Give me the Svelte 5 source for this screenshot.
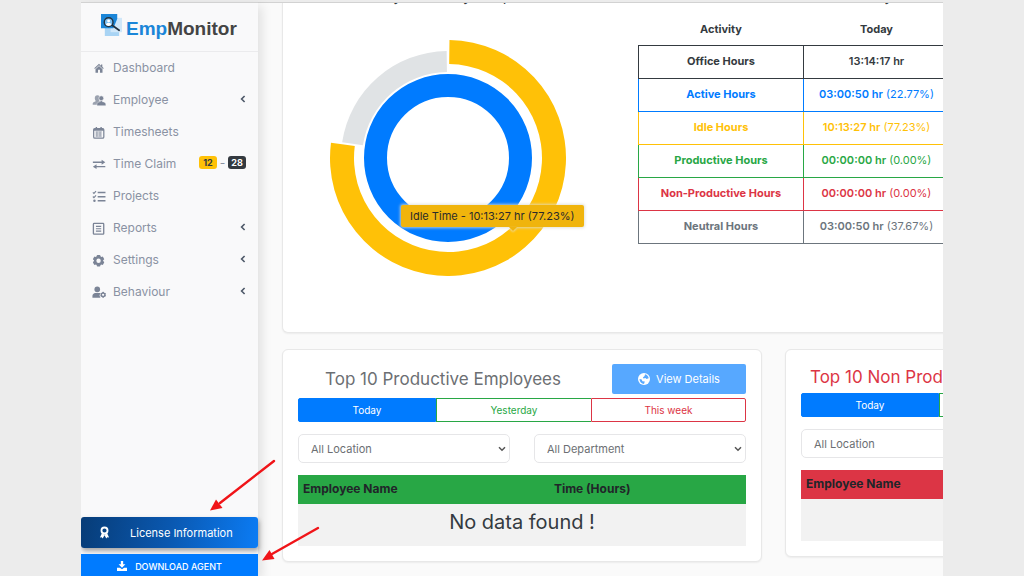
<script>
  const menu = [
    { label: 'Dashboard', icon: 'home' },
    { label: 'Employee', icon: 'people', more: true },
    { label: 'Timesheets', icon: 'calendar' },
    { label: 'Time Claim', icon: 'swap', badges: true },
    { label: 'Projects', icon: 'list' },
    { label: 'Reports', icon: 'report', more: true },
    { label: 'Settings', icon: 'gear', more: true },
    { label: 'Behaviour', icon: 'usergear', more: true }
  ];

  const activity = [
    { name: 'Office Hours', time: '13:14:17 hr', tone: 'dark' },
    { name: 'Active Hours', time: '03:00:50 hr', share: '(22.77%)', tone: 'blue' },
    { name: 'Idle Hours', time: '10:13:27 hr', share: '(77.23%)', tone: 'yellow' },
    { name: 'Productive Hours', time: '00:00:00 hr', share: '(0.00%)', tone: 'green' },
    { name: 'Non-Productive Hours', time: '00:00:00 hr', share: '(0.00%)', tone: 'red' },
    { name: 'Neutral Hours', time: '03:00:50 hr', share: '(37.67%)', tone: 'gray' }
  ];

  // Point on a circle, with the share measured clockwise from the top.
  function point(cx, cy, r, share) {
    const a = share * 2 * Math.PI;
    return `${(cx + r * Math.sin(a)).toFixed(2)} ${(cy - r * Math.cos(a)).toFixed(2)}`;
  }

  function arc(cx, cy, outer, inner, from, to) {
    const large = to - from > 0.5 ? 1 : 0;
    return `M${point(cx, cy, outer, from)} A${outer} ${outer} 0 ${large} 1 ${point(cx, cy, outer, to)} L${point(cx, cy, inner, to)} A${inner} ${inner} 0 ${large} 0 ${point(cx, cy, inner, from)} Z`;
  }

  const idleArc = arc(118, 118, 118, 94, 0.002, 0.7705);
  const restArc = arc(118, 118, 107, 86, 0.7735, 0.998);
</script>

{#snippet gear(cx, cy, r)}
  {#each [0, 60, 120] as turn}
    <rect x={cx - r * 0.32} y={cy - r} width={r * 0.64} height={r * 2} rx="1" transform="rotate({turn} {cx} {cy})" />
  {/each}
  <circle {cx} {cy} r={r * 0.6} fill="none" stroke="currentColor" stroke-width={r * 0.42} />
  <circle {cx} {cy} r={r * 0.38} fill="#f9f9fa" />
{/snippet}

{#snippet icon(name)}
  <svg class="icon" viewBox="0 0 16 16" fill="currentColor" aria-hidden="true">
    {#if name === 'home'}
      <path d="M8 3.2 2.6 8.2l.8.9L8 4.900l4.600 4.200.8-.9-1.600-1.500V3.900h-1.500v1.400z" />
      <path d="M8 5.800 4 9.400V13.500h2.900V10.100h2.200v3.400H12V9.400z" />
    {:else if name === 'people'}
      <path d="M6.200 2.600c2 0 3 1.400 3 3.300 0 1.300-.5 2.300-1.200 3 .6.8 3.600 1 3.600 3.600V13.500H.8v-1.100c0-2.400 3-2.600 3.600-3.400-.7-.7-1.200-1.800-1.200-3.100 0-1.900 1-3.300 3-3.300z" opacity=".75" />
      <circle cx="10.600" cy="6" r="2.800" stroke="#f9f9fa" stroke-width=".7" />
      <path d="M9.400 8.700h2.400v1.200c2.400.4 4 1 4 3v1.600H5.700v-1.600c0-2 1.400-2.600 3.700-3z" stroke="#f9f9fa" stroke-width=".5" />
    {:else if name === 'calendar'}
      <rect x="1.900" y="4" width="11.600" height="11" rx="1.400" fill="none" stroke="currentColor" stroke-width="1.400" />
      <path d="M4.200 2.200h1.600v2.600H4.200zM9.600 2.200h1.600v2.600H9.600zM1.900 4.300h11.600v2.200H1.900z" />
      <path d="M4 8h7.400M4 10.300h7.400M4 12.600h7.400M5.600 7.500v5.800M9.200 7.500v5.800" stroke="currentColor" stroke-width=".8" />
    {:else if name === 'swap'}
      <path d="M1 5.200h10V3.200l4.200 2.800L11 8.800v-2H1zM15.200 10.200H5.200v-2L1 11l4.200 2.800v-2h10z" />
    {:else if name === 'list'}
      <path d="M6.500 4h8.900M6.500 8.800h8.900M6.500 13.500h8.900" stroke="currentColor" stroke-width="1.600" />
      <path d="m1 3.800 1.200 1.200 2.400-2.600M1 8.600l1.200 1.200 2.400-2.600" fill="none" stroke="currentColor" stroke-width="1.300" />
      <circle cx="2.800" cy="13.500" r="1.400" />
    {:else if name === 'report'}
      <rect x="1.600" y="2.800" width="11.800" height="12.200" rx=".8" fill="none" stroke="currentColor" stroke-width="1.500" />
      <path d="M4.500 6.200h6M4.500 8.900h6M4.500 11.600h6" stroke="currentColor" stroke-width="1.300" />
    {:else if name === 'gear'}
      {@render gear(7.5, 8.8, 6.6)}
    {:else if name === 'usergear'}
      <circle cx="6" cy="5" r="3.200" />
      <path d="M.5 14.500v-2.100c0-1.800 1.500-3.400 3.300-3.400H8c.7 0 1 .2 1.400.5L8.600 12l1 2.500z" />
      {@render gear(12.7, 11.2, 3.4)}
    {/if}
  </svg>
{/snippet}

{#snippet picker(id, label, text)}
  <div class="picker">
    <select {id} aria-label={label}>
      <option>{text}</option>
    </select>
    <svg viewBox="0 0 8 6" aria-hidden="true"><path d="m1 1.200 3 3 3-3" fill="none" stroke="#555" stroke-width="1.500" /></svg>
  </div>
{/snippet}

{#snippet tabs()}
  <div class="tabs">
    <button class="tab today">Today</button>
    <button class="tab yesterday">Yesterday</button>
    <button class="tab week">This week</button>
  </div>
{/snippet}

<div class="shell">
  <aside>
    <a class="brand" href="#home">
      <svg viewBox="0 0 22 24" aria-hidden="true">
        <rect x="4" y="8" width="15" height="15" fill="#a9d4f4" />
        <rect x="10" y="4" width="12" height="15" fill="#d0e7f9" />
        <path d="M0 0h17v5l-4 10H0z" fill="#1b86d8" />
        <circle cx="8" cy="8.500" r="4.600" fill="#7fc1f2" stroke="#24323f" stroke-width="1.500" />
        <circle cx="8" cy="7.200" r="1.500" fill="#fff" />
        <path d="M5.100 11.300c.4-3 5.400-3 5.800 0-1.500 1.500-4.300 1.500-5.800 0z" fill="#fff" />
        <path d="m12 12 7 5" stroke="#24323f" stroke-width="1.800" stroke-linecap="round" />
      </svg>
      <span><b>Emp</b>Monitor</span>
    </a>
    <nav>
      {#each menu as item}
        <a href="#{item.icon}">
          {@render icon(item.icon)}
          <span class="label">{item.label}</span>
          {#if item.badges}
            <span class="badge warn">12</span>
            <span class="dash">-</span>
            <span class="badge ink">28</span>
          {/if}
          {#if item.more}
            <svg class="chevron" viewBox="0 0 6 8" aria-hidden="true"><path d="M4.600 1 1.600 4l3 3" fill="none" stroke="#4d5868" stroke-width="1.600" /></svg>
          {/if}
        </a>
      {/each}
    </nav>
    <button class="license">
      <svg viewBox="0 0 12 14" aria-hidden="true">
        <circle cx="6" cy="4.800" r="3.300" fill="none" stroke="#fff" stroke-width="2" />
        <path d="M3 8 1 12.400l2-.2 1 1.400L6 10l2 3.600 1-1.400 2 .2L9 8 6 9.200z" fill="#fff" />
      </svg>
      <span>License Information</span>
    </button>
    <button class="download">
      <svg viewBox="0 0 12 12" aria-hidden="true">
        <path d="M4.600 0h2.800v4h2.700L6 8.200 1.900 4h2.700z" fill="#fff" />
        <path d="M0 8h3.500L6 10l2.500-2H12v4H0z" fill="#fff" />
      </svg>
      <span>DOWNLOAD AGENT</span>
    </button>
  </aside>

  <main>
    <div class="content">
      <section class="card overview">
        <div class="snapshot">
          <h2>Today's Activity Snapshot</h2>
          <div class="chart">
            <svg viewBox="0 0 236 236" role="img" aria-label="Activity chart">
              <circle cx="118" cy="118" r="72.500" fill="none" stroke="#007bff" stroke-width="23" />
              <path d={restArc} fill="#e0e3e5" />
              <path d={idleArc} fill="#ffc107" />
            </svg>
            <div class="tooltip">Idle Time - 10:13:27 hr (77.23%)</div>
          </div>
        </div>
        <div class="breakdown">
          <h2>Activity Breakdown</h2>
          <table>
            <thead>
              <tr><th>Activity</th><th>Today</th></tr>
            </thead>
            <tbody>
              {#each activity as row}
                <tr class={row.tone}>
                  <td class="name">{row.name}</td>
                  <td><b>{row.time}</b>{#if row.share}{' '}{row.share}{/if}</td>
                </tr>
              {/each}
            </tbody>
          </table>
        </div>
      </section>

      <div class="rankings">
        <section class="card rank good">
          <header>
            <h3>Top 10 Productive Employees</h3>
            <button class="details">
              <svg viewBox="0 0 12 12" aria-hidden="true">
                <circle cx="6" cy="6" r="6" fill="#fff" />
                <path d="M7 1.200c2 .4 3.500 2 3.700 4L8.500 6l-1-1-2 .4-.6-1L6.600 3zM1.500 6l2.200.6.7 1.600 2.400.4-.8 2.300C3.500 10.800 1.500 9 1.500 6z" fill="#57a8ff" />
              </svg>
              <span>View Details</span>
            </button>
          </header>
          {@render tabs()}
          <div class="filters">
            {@render picker('loc', 'Location', 'All Location')}
            {@render picker('dep', 'Department', 'All Department')}
          </div>
          <table>
            <thead><tr><th>Employee Name</th><th>Time (Hours)</th></tr></thead>
            <tbody><tr><td colspan="2">No data found !</td></tr></tbody>
          </table>
        </section>

        <section class="card rank bad">
          <header>
            <h3>Top 10 Non Productive Employees</h3>
          </header>
          {@render tabs()}
          <div class="filters">
            {@render picker('loc-non', 'Location', 'All Location')}
            {@render picker('dep-non', 'Department', 'All Department')}
          </div>
          <table>
            <thead><tr><th>Employee Name</th><th>Time (Hours)</th></tr></thead>
            <tbody><tr><td colspan="2">No data found !</td></tr></tbody>
          </table>
        </section>
      </div>
    </div>
  </main>

  <svg class="arrows" viewBox="0 0 120 110" aria-hidden="true">
    <g stroke="#f01418" stroke-width="2.400" stroke-linecap="round" fill="#f01418">
      <path d="M66 4 12 46" />
      <path d="m2 53.500 6-11 6.500 8.500z" stroke="none" />
      <path d="M110 71 64 97" />
      <path d="m54 103.500 7.500-10.500 5 9z" stroke="none" />
    </g>
  </svg>
</div>

<style>
  :global(body) {
    margin: 0;
    background: #ececec;
  }
  .shell, .shell :is(button, select) {
    font-family: Inter, 'Open Sans', sans-serif;
  }
  .shell {
    position: relative;
    display: flex;
    box-sizing: border-box;
    height: 100vh;
    padding-top: 2px;
    margin: 0 81px;
    overflow: hidden;
    font-size: 12px;
    line-height: 16px;
    color: #343a40;
  }
  .shell * {
    box-sizing: border-box;
  }
  button {
    margin: 0;
    border: 0;
    padding: 0;
    cursor: pointer;
  }
  a {
    color: inherit;
    text-decoration: none;
  }
  h2, h3 {
    margin: 0;
    font-weight: 400;
  }

  aside {
    position: relative;
    z-index: 1;
    display: flex;
    flex-direction: column;
    flex: 0 0 177px;
    border-top: 1px solid #d2d2d2;
    background: #f9f9fa;
    box-shadow: 4px 4px 10px rgba(0, 0, 0, 0.1);
  }
  .brand {
    display: flex;
    align-items: flex-start;
    gap: 4px;
    height: 49px;
    padding: 11px 0 0 20px;
    border-bottom: 1px solid #ebebed;
    font: bold 19px/30px 'Liberation Sans', sans-serif;
    color: #444;
  }
  .brand svg {
    width: 21px;
    height: 23px;
  }
  .brand b {
    color: #1b86d8;
  }
  nav {
    flex: 1;
  }
  nav a {
    display: flex;
    align-items: center;
    height: 32px;
    padding: 0 12px 0 11px;
    color: #8a92a3;
  }
  .icon {
    flex: none;
    width: 14px;
    height: 14px;
    color: #7b8496;
  }
  .label {
    flex: 1;
    padding-left: 7px;
  }
  .chevron {
    width: 6px;
    height: 8px;
    margin-bottom: 3px;
  }
  .badge {
    width: 18px;
    margin-bottom: 3px;
    border-radius: 3px;
    font-size: 9px;
    font-weight: 700;
    line-height: 13px;
    text-align: center;
  }
  .dash {
    width: 11px;
    margin-bottom: 3px;
    text-align: center;
  }
  .warn {
    background: #ffc107;
    color: #343a40;
  }
  .ink {
    background: #343a40;
    color: #fff;
  }
  .license {
    display: flex;
    align-items: center;
    gap: 20px;
    height: 31px;
    padding-left: 18px;
    border-radius: 3px;
    background: linear-gradient(100deg, #073c77, #0a58b0 50%, #0b7cf5);
    box-shadow: 1px 3px 5px rgba(0, 0, 0, 0.35);
    font-size: 11px;
    color: #fff;
  }
  .license svg {
    width: 11px;
    height: 13px;
  }
  .download {
    display: flex;
    align-items: center;
    justify-content: center;
    gap: 8px;
    height: 22px;
    margin-top: 6px;
    padding-top: 2px;
    background: #007bff;
    font-size: 9px;
    font-weight: 500;
    color: #fff;
  }
  .download svg {
    width: 10px;
    height: 10px;
  }

  main {
    flex: 1;
    min-width: 0;
    overflow: hidden;
    padding-left: 24px;
    border-top: 1px solid #d2d2d2;
    background: #fafafa;
  }
  .content {
    min-width: 983px;
  }
  .card {
    border: 1px solid #e8e8e8;
    border-radius: 6px;
    background: #fff;
    box-shadow: 0 1px 2px rgba(0, 0, 0, 0.06);
  }
  .overview {
    display: flex;
    height: 330px;
    border-top: 0;
    border-radius: 0 0 6px 6px;
  }
  .snapshot {
    width: 355px;
  }
  h2 {
    height: 19px;
    margin-top: -17px;
    font-size: 15px;
    line-height: 19px;
    text-align: center;
  }
  .snapshot h2 {
    padding-right: 20px;
  }
  .chart {
    position: relative;
    width: 236px;
    margin: 35px 0 0 47px;
  }
  .chart svg {
    display: block;
    width: 100%;
  }
  .tooltip {
    position: absolute;
    top: 165px;
    left: 71px;
    padding: 3px 9px;
    border-radius: 2px;
    background: #f0b40c;
    box-shadow: 0 0 3px 1px rgba(220, 220, 210, 0.8);
    font-size: 11px;
    white-space: nowrap;
    color: #2b2b2b;
  }
  .tooltip::after {
    content: '';
    position: absolute;
    top: 100%;
    left: 108px;
    border: 4px solid transparent;
    border-top-color: #f0b40c;
    border-bottom: 0;
    filter: drop-shadow(0 1px 1px #eadfb8);
  }
  .breakdown {
    width: 540px;
  }
  .breakdown table {
    width: 312px;
    margin-top: 15px;
    border-collapse: collapse;
    table-layout: fixed;
    font-size: 11px;
    text-align: center;
  }
  .breakdown th {
    height: 25px;
    padding: 0 0 6px;
    font-size: 11px;
  }
  .breakdown th:first-child {
    width: 165px;
  }
  .breakdown td {
    height: 33px;
    padding: 0 0 2px;
    border: 1px solid currentColor;
  }
  .breakdown b {
    font-weight: 600;
  }
  .name {
    font-weight: 700;
  }
  .dark { color: #343a40; }
  .blue { color: #007bff; }
  .yellow { color: #ffc107; }
  .green { color: #28a745; }
  .red { color: #dc3545; }
  .gray { color: #6c757d; }

  .rankings {
    display: grid;
    grid-template-columns: 1fr 1fr;
    align-items: start;
    gap: 23px;
    margin-top: 16px;
  }
  .rank {
    padding: 14px 15px 15px;
  }
  .rank header {
    display: flex;
    align-items: center;
    height: 30px;
    margin-bottom: 4px;
  }
  .rank.bad header {
    height: 25px;
  }
  h3 {
    flex: 1;
    padding-right: 24px;
    font-size: 17px;
    line-height: 22px;
    text-align: center;
    white-space: nowrap;
    color: #6c6f73;
  }
  .bad h3 {
    padding-left: 9px;
    text-align: left;
    color: #dc3545;
  }
  .details {
    display: flex;
    align-items: center;
    justify-content: center;
    gap: 6px;
    width: 134px;
    height: 30px;
    border-radius: 2px;
    background: #57a8ff;
    font-size: 11px;
    color: #fff;
  }
  .details svg {
    width: 12px;
    height: 12px;
  }
  .tabs {
    display: grid;
    grid-template-columns: 138fr 155fr 155fr;
    height: 24px;
  }
  .tab {
    border: 1px solid;
    background: #fff;
    font-size: 10px;
  }
  .today {
    border-color: #007bff;
    border-radius: 2px 0 0 2px;
    background: #007bff;
    color: #fff;
  }
  .yesterday {
    border-right: 0;
    color: #28a745;
  }
  .week {
    border-radius: 0 2px 2px 0;
    color: #dc3545;
  }
  .filters {
    display: grid;
    grid-template-columns: 1fr 1fr;
    gap: 24px;
    margin: 12px 0;
  }
  .picker {
    display: grid;
    align-items: center;
  }
  .picker > * {
    grid-area: 1 / 1;
  }
  .picker svg {
    justify-self: end;
    width: 8px;
    height: 6px;
    margin-right: 4px;
    pointer-events: none;
  }
  select {
    width: 100%;
    height: 29px;
    padding: 0 12px;
    border: 1px solid #e6e6e8;
    border-radius: 5px;
    appearance: none;
    background: #fff;
    font-size: 11px;
    color: #6c6f73;
  }
  .rank table {
    width: 100%;
    border-collapse: collapse;
    table-layout: fixed;
  }
  .rank th {
    height: 29px;
    padding: 0 5px 2px;
    font-size: 12px;
    text-align: left;
    color: #212529;
  }
  .rank th:first-child {
    width: 56%;
  }
  .good thead {
    background: #28a745;
  }
  .bad thead {
    background: #dc3545;
  }
  .rank tbody {
    background: #f2f2f2;
  }
  .rank td {
    height: 42px;
    padding: 0 0 6px;
    font-size: 20px;
    line-height: 24px;
    text-align: center;
    color: #343a40;
  }

  .arrows {
    position: absolute;
    z-index: 2;
    bottom: 9px;
    left: 127px;
    width: 120px;
    height: 110px;
    pointer-events: none;
  }
</style>
